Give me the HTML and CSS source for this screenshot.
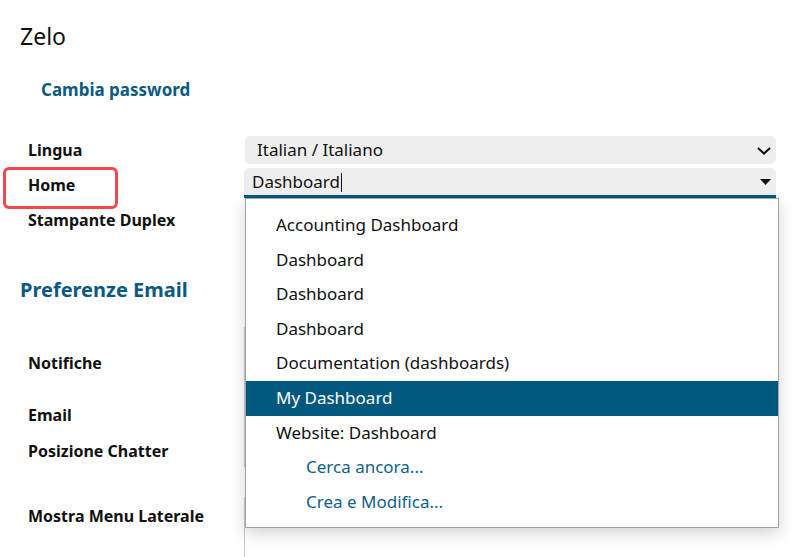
FILE: index.html
```html
<!DOCTYPE html>
<html lang="it">
<head>
<meta charset="utf-8">
<title>Preferenze</title>
<link rel="stylesheet" href="styles.css">
</head>
<body>
<div class="page">
  <h1 class="user-name">Zelo</h1>
  <a class="change-pw">Cambia password</a>

  <div class="form">
    <div class="row row-lang">
      <div class="label">Lingua</div>
      <div class="field select">
        <span class="value">Italian / Italiano</span>
        <svg class="chev" width="14" height="8" viewBox="0 0 14 8"><path d="M1 1 L7 6.6 L13 1" fill="none" stroke="#111" stroke-width="2"/></svg>
      </div>
    </div>

    <div class="row row-home">
      <div class="label label-home">Home</div>
      <div class="field combo">
        <span class="value">Dashboard<span class="caret"></span></span>
        <svg class="tri" width="11" height="6" viewBox="0 0 11 6"><path d="M0 0 H11 L5.5 6 Z" fill="#111"/></svg>
        <ul class="dropdown">
          <li>Accounting Dashboard</li>
          <li>Dashboard</li>
          <li>Dashboard</li>
          <li>Dashboard</li>
          <li>Documentation (dashboards)</li>
          <li class="active">My Dashboard</li>
          <li>Website: Dashboard</li>
          <li class="extra">Cerca ancora...</li>
          <li class="extra">Crea e Modifica...</li>
        </ul>
      </div>
    </div>

    <div class="row row-duplex">
      <div class="label">Stampante Duplex</div>
      <div class="field plain"></div>
    </div>

    <h2 class="section">Preferenze Email</h2>

    <div class="row row-notif">
      <div class="label">Notifiche</div>
      <div class="field ghost ghost-a"></div>
    </div>
    <div class="row row-email">
      <div class="label">Email</div>
      <div class="field plain"></div>
    </div>
    <div class="row row-chatter">
      <div class="label">Posizione Chatter</div>
      <div class="field plain"></div>
    </div>
    <div class="row row-menu">
      <div class="label">Mostra Menu Laterale</div>
      <div class="field ghost ghost-b"></div>
    </div>
  </div>
</div>
</body>
</html>
```

FILE: styles.css
```css
* { box-sizing: border-box; }

html, body {
  margin: 0;
  padding: 0;
  background: #ffffff;
}

body {
  font-family: "Noto Sans", "Open Sans", sans-serif;
  color: #111111;
  width: 811px;
  height: 557px;
  overflow: hidden;
}

.page {
  padding: 20px 0 0 20px;
}

.user-name {
  margin: 0;
  font-size: 23px;
  font-weight: 400;
  line-height: 32px;
  color: #111;
}

.change-pw {
  display: block;
  margin: 26px 0 0 21px;
  font-size: 17px;
  font-weight: 700;
  line-height: 24px;
  color: #0b5a80;
}

.form {
  margin-top: 34px;
}

.row {
  display: grid;
  grid-template-columns: 217px 531px;
  padding-left: 8px;
  align-items: center;
}

.label {
  font-size: 16px;
  font-weight: 700;
  line-height: 20px;
  color: #111;
}

.label-home {
  position: relative;
  top: 2px;
}

.label-home::after {
  content: "";
  position: absolute;
  left: -25px;
  top: -8px;
  width: 109px;
  height: 36px;
  border: 3px solid #f2484c;
  border-radius: 6px;
}

.field {
  position: relative;
}

.select, .combo {
  background: #eeeeee;
  display: flex;
  align-items: center;
  justify-content: space-between;
  font-size: 17px;
}

.select {
  height: 28px;
  border-radius: 5px;
  padding: 0 5px 0 12px;
}

.combo {
  height: 30px;
  margin-left: -1px;
  padding: 0 5px 0 8px;
  border-bottom: 3px solid #01587f;
  border-radius: 5px 5px 0 0;
}

.row-lang { grid-template-rows: 28px; }
.row-home { grid-template-rows: 30px; margin-top: 4px; }
.row-duplex { grid-template-rows: 24px; margin-top: 10px; }

.value {
  line-height: 22px;
}

.caret {
  display: inline-block;
  width: 1px;
  height: 19px;
  background: #111;
  vertical-align: -4px;
  margin-left: 1px;
}

.chev { margin-top: 1px; }
.tri { margin-top: 1px; }

.dropdown {
  position: absolute;
  z-index: 5;
  top: 30px;
  left: 1px;
  width: 534px;
  margin: 0;
  padding: 9px 0 8px;
  list-style: none;
  background: #ffffff;
  border: 1px solid #a3a3a3;
  box-shadow: 0 6px 14px rgba(0, 0, 0, 0.17);
  font-size: 17px;
}

.dropdown li {
  height: 34.6px;
  line-height: 34px;
  padding-left: 30px;
  color: #111;
}

.dropdown li.active {
  background: #01587f;
  color: #ffffff;
}

.dropdown li.extra {
  padding-left: 60px;
  color: #0e5f8a;
}

.section {
  margin: 45px 0 0 0;
  font-size: 20px;
  font-weight: 700;
  line-height: 26px;
  color: #0b5a80;
}

.row-notif { grid-template-rows: 24px; margin-top: 48px; }
.row-email { grid-template-rows: 24px; margin-top: 28px; }
.row-chatter { grid-template-rows: 24px; margin-top: 12px; }
.row-menu { grid-template-rows: 24px; margin-top: 41px; }

.plain { height: 24px; }

.ghost {
  align-self: start;
  margin-left: -1px;
  border-left: 1px solid #c9c9c9;
}

.ghost-a {
  margin-top: -24px;
  height: 140px;
}

.ghost-b {
  margin-top: -7px;
  height: 60px;
}
```
